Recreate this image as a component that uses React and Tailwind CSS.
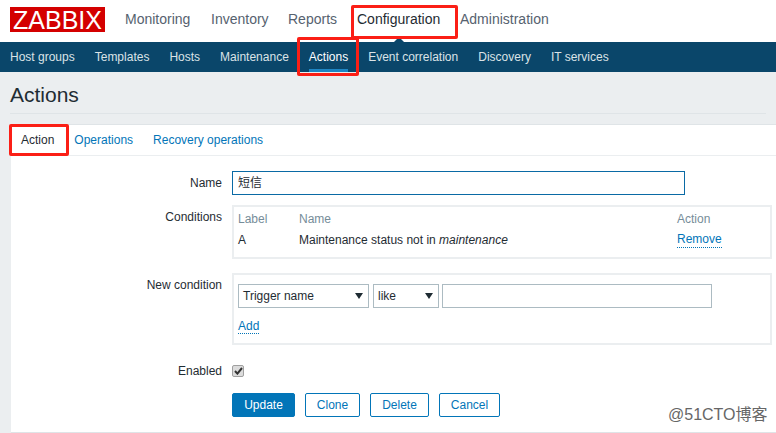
const mainMenu = [
  { label: "Monitoring", w: "w-[86px]" },
  { label: "Inventory", w: "w-[77px]" },
  { label: "Reports", w: "w-[69px]" },
  { label: "Configuration", w: "w-[103px]", active: true },
  { label: "Administration", w: "w-[110px]" },
];

const subMenu = ["Host groups", "Templates", "Hosts", "Maintenance", "Actions", "Event correlation", "Discovery", "IT services"];

function Caret() {
  return (
    <svg width="8" height="6" viewBox="0 0 8 6" className="shrink-0">
      <path d="M0 0h8L4 6z" fill="#1f2c33" />
    </svg>
  );
}

function Select({ value, className }) {
  return (
    <div className={`h-6 flex items-center justify-between pl-1 pr-[5px] border border-[#acbbc2] text-[#1f2c33] ${className}`}>
      <span>{value}</span>
      <Caret />
    </div>
  );
}

function Row({ label, labelClass, className, children }) {
  return (
    <div className={`flex ${className}`}>
      <div className={`w-[211px] shrink-0 text-right text-[#1f2c33] ${labelClass || ""}`}>{label}</div>
      <div className="ml-[10px] flex-1">{children}</div>
    </div>
  );
}

function Button({ children, className }) {
  return (
    <button className={`h-6 rounded-[2px] border border-[#0275b8] text-[#0275b8] bg-white flex items-center justify-center ${className}`}>
      {children}
    </button>
  );
}

export default function App() {
  return (
    <div className="relative w-[776px] h-[433px] overflow-hidden bg-[#ebeef0] text-xs font-['Liberation_Sans','Noto_Sans_CJK_SC',sans-serif]">
      <div className="h-[42px] bg-white flex items-start relative">
        <div className="ml-[10px] mt-[7px] w-[95px] h-[25px] bg-[#d40000] text-white text-[25px] leading-[26px] text-center">
          ZABBIX
        </div>
        <nav className="ml-[20px] flex h-[40px] items-center text-sm text-[#56626f] pb-[3px]">
          {mainMenu.map((item) => (
            <a key={item.label} className={`${item.w} ${item.active ? "text-[#1f2c33]" : ""}`}>
              {item.label}
            </a>
          ))}
        </nav>
        <div className="absolute left-[394px] top-[37px] w-0 h-0 border-x-[5px] border-x-transparent border-b-[5px] border-b-[#0a466a]" />
      </div>

      <div className="h-[30px] bg-[#0a466a] flex gap-[20px] pl-[10px] text-[#dbe3e7]">
        {subMenu.map((item) => (
          <a
            key={item}
            className={`h-[30px] leading-[30px] ${item === "Actions" ? "text-white border-b-[3px] border-[#1f86c4]" : ""}`}
          >
            {item}
          </a>
        ))}
      </div>

      <div className="mx-[10px] h-[42px] border-b border-[#dfe4e7] text-[21px] leading-[46px] text-[#1f2c33]">Actions</div>

      <div className="mt-[10px] ml-[11px] bg-white border-t border-[#dfe4e7] h-[309px] border-b">
        <div className="h-[31px] border-b border-[#ebeef0] flex items-center gap-[20px] pl-[10px] pb-[1px] text-[#0275b8]">
          <span className="text-[#1f2c33]">Action</span>
          <a>Operations</a>
          <a>Recovery operations</a>
        </div>

        <Row label="Name" className="mt-[15px] items-center h-6">
          <div className="w-[453px] h-6 border border-[#0a6aa5] pl-[5px] leading-[22px] text-[#1f2c33]">短信</div>
        </Row>

        <Row label="Conditions" labelClass="pt-[4px]" className="mt-[10px]">
          <div className="w-[540px] h-[54px] border-2 border-[#ebeef0] pl-[4px] text-[#1f2c33]">
            <div className="flex h-[24px] items-center text-[#768d99]">
              <span className="w-[61px]">Label</span>
              <span className="w-[378px]">Name</span>
              <span>Action</span>
            </div>
            <div className="flex items-center h-[17px]">
              <span className="w-[61px]">A</span>
              <span className="w-[378px]">
                Maintenance status not in <em>maintenance</em>
              </span>
              <a className="text-[#0275b8] border-b border-dotted border-[#0275b8]">Remove</a>
            </div>
          </div>
        </Row>

        <Row label="New condition" labelClass="pt-[4px]" className="mt-[14px]">
          <div className="w-[540px] h-[72px] border-2 border-[#ebeef0] pl-[4px] pt-[9px]">
            <div className="flex">
              <Select value="Trigger name" className="w-[131px]" />
              <Select value="like" className="ml-[4px] w-[66px]" />
              <div className="ml-[3px] w-[270px] h-6 border border-[#acbbc2]" />
            </div>
            <a className="inline-block mt-[11px] text-[#0275b8] border-b border-dotted border-[#0275b8] leading-[14px]">Add</a>
          </div>
        </Row>

        <Row label="Enabled" className="mt-[19px] items-center h-[14px]">
          <div className="w-[12px] h-[12px] rounded-[2px] bg-[#dcdcdc] border border-[#a0a0a0] flex items-center justify-center">
            <svg width="9" height="8" viewBox="0 0 9 8">
              <path d="M1 4l2.4 2.6L8 1" fill="none" stroke="#333" strokeWidth="2" />
            </svg>
          </div>
        </Row>

        <div className="ml-[221px] mt-[15px] flex gap-[10px]">
          <Button className="w-[63px] !bg-[#0275b8] !text-white">Update</Button>
          <Button className="w-[55px]">Clone</Button>
          <Button className="w-[59px]">Delete</Button>
          <Button className="w-[61px]">Cancel</Button>
        </div>
      </div>

      {/* red annotation boxes */}
      <div className="absolute left-[351px] top-[5px] w-[107px] h-[34px] border-[3px] border-[#fb1f16] rounded-[2px]" />
      <div className="absolute left-[297px] top-[37px] w-[62px] h-[39px] border-[3px] border-[#fb1f16] rounded-[2px]" />
      <div className="absolute left-[9px] top-[124px] w-[60px] h-[32px] border-[3px] border-[#fb1f16] rounded-[2px]" />

      <div className="absolute left-[668px] top-[405px] text-base leading-[20px] text-[#666] whitespace-nowrap">@51CTO博客</div>
    </div>
  );
}
